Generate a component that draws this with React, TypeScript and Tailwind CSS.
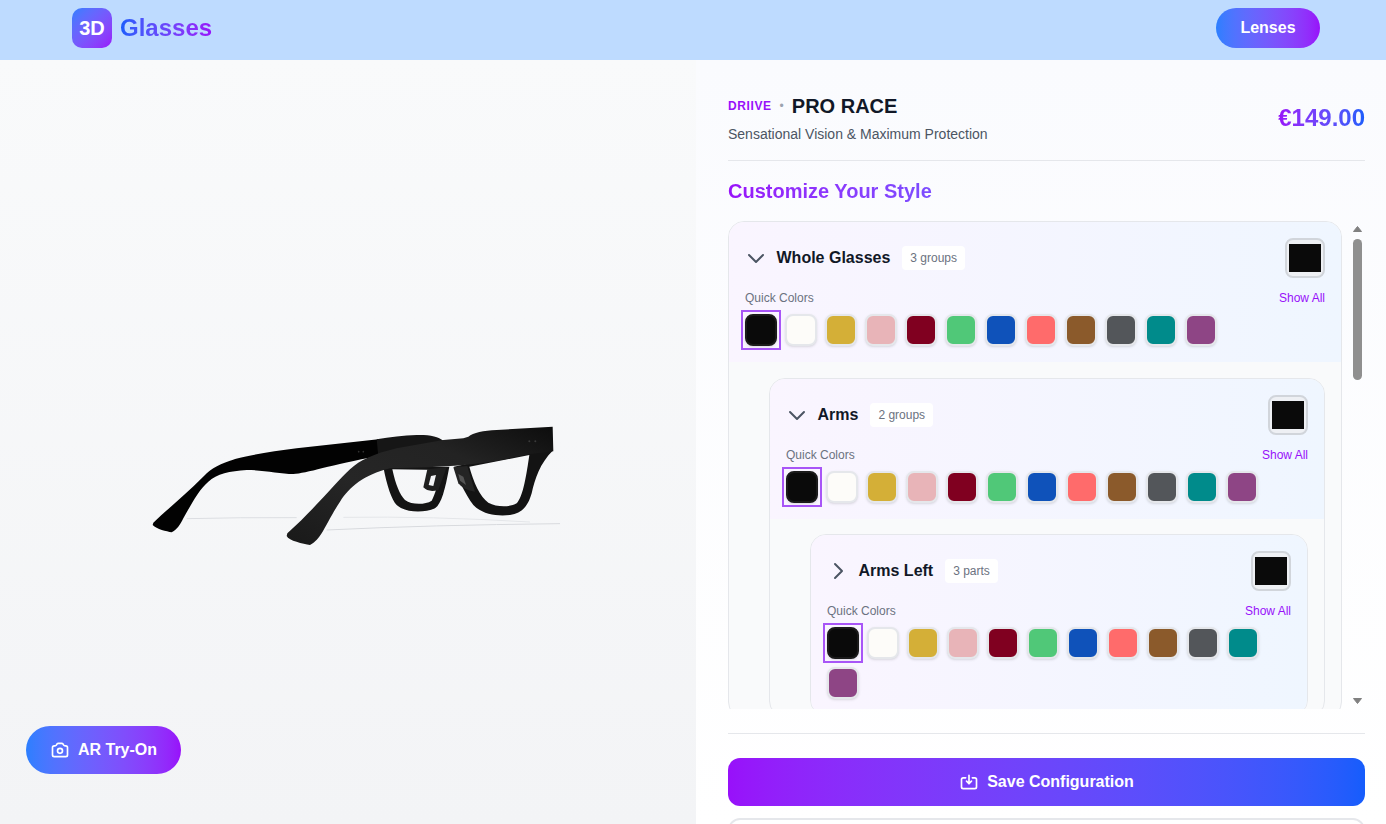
const swatches = [
  '#0a0a0a', '#fdfcf9', '#d4af37', '#e8b4b8', '#800020', '#50c878',
  '#0f52ba', '#ff6b6b', '#8b5a2b', '#53565a', '#008b8b', '#8e4585',
]

function Chevron({ open }: { open: boolean }) {
  return (
    <svg viewBox="0 0 24 24" fill="none" stroke="#4b5563" strokeWidth="2" strokeLinecap="round" strokeLinejoin="round" className="w-6 h-6 -ml-[1.5px] shrink-0">
      <path d={open ? 'M19 9l-7 7-7-7' : 'M9 5l7 7-7 7'} />
    </svg>
  )
}

function SwatchRow() {
  return (
    <div className="flex flex-wrap gap-2 mt-2">
      {swatches.map((color, i) => (
        <div
          key={color}
          className={`relative w-8 h-8 rounded-lg border-2 shadow-sm ${i === 0 ? 'border-[#1a1a1a]' : 'border-[#e5e7eb]'}`}
          style={{ backgroundColor: color }}
        >
          {i === 0 && <span className="absolute -inset-[6px] border-2 border-[#a855f7]" />}
        </div>
      ))}
    </div>
  )
}

function GroupCard({ title, count, open, children }: { title: string; count: string; open: boolean; children?: React.ReactNode }) {
  return (
    <div className="rounded-2xl border border-[#e5e7eb] bg-[#f9fafb] overflow-hidden">
      <div className="p-4 bg-gradient-to-r from-[#faf5ff] to-[#eff6ff]">
        <div className="flex items-center justify-between h-10">
          <div className="flex items-center gap-[9px]">
            <Chevron open={open} />
            <span className="text-base font-bold text-[#111827]">{title}</span>
            <span className="ml-[3px] px-2 py-1 rounded bg-white text-xs text-[#6b7280]">{count}</span>
          </div>
          <div className="w-10 h-10 rounded-lg border-2 border-[#d1d5db] bg-[#eef0f4] px-0.5 py-1">
            <div className="w-full h-full bg-[#0a0a0a]" />
          </div>
        </div>
        <div className="flex items-center justify-between mt-3 text-xs leading-4">
          <span className="text-[#6b7280]">Quick Colors</span>
          <span className="text-[#9810fa]">Show All</span>
        </div>
        <SwatchRow />
      </div>
      {children && <div className="pl-10 pr-4 pt-[15.6px]">{children}</div>}
    </div>
  )
}

function GlassesModel() {
  return (
    <svg viewBox="0 0 1320 450" className="w-[440px] h-[150px]">
      <defs>
        <linearGradient id="nearArm" x1="0" y1="1" x2="1" y2="0">
          <stop offset="0" stopColor="#191919" />
          <stop offset="0.4" stopColor="#262626" />
          <stop offset="0.7" stopColor="#232323" />
          <stop offset="1" stopColor="#0d0d0d" />
        </linearGradient>
        <filter id="soft" filterUnits="userSpaceOnUse" x="0" y="280" width="1320" height="120">
          <feGaussianBlur stdDeviation="1.5" />
        </filter>
      </defs>
      <path d="M170 326 Q330 322 500 323" stroke="#dcdee2" strokeWidth="3" fill="none" filter="url(#soft)" />
      <path d="M590 360 Q900 345 1290 341" stroke="#d8dade" strokeWidth="3" fill="none" filter="url(#soft)" />
      <path d="M640 322 Q900 318 1200 336" stroke="#e4e6e9" strokeWidth="3" fill="none" filter="url(#soft)" />
      {/* far arm */}
      <path d="M68 345 C80 358 110 364 125 367 C140 360 150 345 160 325 C180 290 205 240 235 215 C260 192 300 183 350 180 C400 180 450 192 490 192 C530 190 600 165 745 138 L745 88 L500 115 C420 125 340 138 300 152 C260 165 235 182 215 205 C170 250 110 300 70 338 Z" fill="#020202" />
      <path d="M740 88 C780 82 820 76 860 75 C900 74 925 80 940 92 L945 130 L745 140 Z" fill="#161616" />
      <circle cx="686" cy="125" r="2.5" fill="#333" />
      <circle cx="700" cy="125" r="2.5" fill="#333" />
      {/* rims */}
      <path fillRule="evenodd" d="M760 170 C770 225 785 270 800 285 C825 308 880 310 915 295 C935 280 945 240 958 170 Z M787 178 C797 225 810 255 825 270 C845 285 885 285 905 272 C915 255 925 220 932 180 Z" fill="#141414" />
      <path d="M892 178 L950 172 L925 240 Q895 248 880 232 Z" fill="#1f1f1f" />
      <path d="M903 198 L918 195 L910 228 L896 225 Z" fill="#f4f5f7" />
      <path fillRule="evenodd" d="M972 170 C985 210 1005 250 1030 285 C1055 312 1100 320 1140 315 C1180 308 1195 285 1205 250 C1215 205 1230 160 1268 122 L1190 125 L1018 160 Z M1018 170 C1030 215 1050 260 1075 278 C1100 292 1140 292 1160 280 C1180 260 1190 190 1198 135 Z" fill="#131313" />
      <path d="M970 172 L1012 168 L1035 245 Q1000 240 985 220 Z" fill="#242424" />
      <path d="M985 192 L1000 200 L1008 225 L990 212 Z" fill="#555" />
      {/* near arm and brow */}
      <path d="M470 378 C476 392 520 402 540 405 C558 395 565 385 575 370 C590 345 610 305 630 275 C660 230 700 195 780 175 C860 172 930 172 1000 165 C1100 155 1150 142 1200 132 L1270 124 L1268 50 L1100 60 C1060 62 1030 68 1015 80 L1000 85 L940 90 L800 115 C730 132 690 150 660 178 C620 215 560 290 472 370 Z" fill="url(#nearArm)" />
      <circle cx="1198" cy="94" r="3" fill="#3a3a3a" />
      <circle cx="1216" cy="94" r="3" fill="#3a3a3a" />
    </svg>
  )
}

export default function App() {
  return (
    <div className="h-screen overflow-hidden flex flex-col font-['Liberation_Sans',Arial,sans-serif]">
      <header className="h-[60px] shrink-0 bg-[#bedbff] flex items-start justify-between pt-2 pl-[72px] pr-[66px]">
        <div className="flex items-center gap-2">
          <div className="w-10 h-10 rounded-[10px] bg-gradient-to-br from-[#2b7fff] to-[#9810fa] flex items-center justify-center text-white text-xl font-bold">3D</div>
          <span className="text-2xl font-bold text-transparent bg-clip-text bg-gradient-to-r from-[#155dfc] to-[#9810fa]">Glasses</span>
        </div>
        <button className="w-[104px] h-10 rounded-full bg-gradient-to-r from-[#2b7fff] to-[#9810fa] text-white font-bold">Lenses</button>
      </header>

      <div className="flex-1 flex min-h-0">
        <div className="relative w-[696px] shrink-0 bg-gradient-to-b from-[#f9fafb] to-[#f3f4f6] pl-[130px] pt-[350px]">
          <GlassesModel />
          <button className="absolute left-[26px] bottom-[50px] h-12 w-[155px] rounded-full bg-gradient-to-r from-[#2b7fff] to-[#9810fa] text-white font-bold flex items-center justify-center gap-2">
            <svg viewBox="0 0 24 24" fill="none" stroke="currentColor" strokeWidth="2" strokeLinecap="round" strokeLinejoin="round" className="w-5 h-5">
              <path d="M3 9a2 2 0 012-2h.93a2 2 0 001.664-.89l.812-1.22A2 2 0 0110.07 4h3.86a2 2 0 011.664.89l.812 1.22A2 2 0 0018.07 7H19a2 2 0 012 2v9a2 2 0 01-2 2H5a2 2 0 01-2-2V9z" />
              <path d="M15 13a3 3 0 11-6 0 3 3 0 016 0z" />
            </svg>
            AR Try-On
          </button>
        </div>

        <div className="flex-1 min-w-0 flex flex-col overflow-hidden bg-gradient-to-b from-[#fafbfe] to-white pl-8 pr-[21px] pt-8">
          <div className="flex items-center justify-between pb-4 border-b border-[#e5e7eb]">
            <div>
              <div className="flex items-center gap-2">
                <span className="text-xs font-bold tracking-wider text-[#9810fa]">DRIIVE</span>
                <span className="text-xs text-[#9ca3af]">•</span>
                <span className="text-xl font-bold text-[#111827]">PRO RACE</span>
              </div>
              <p className="mt-1 text-sm text-[#4b5563]">Sensational Vision &amp; Maximum Protection</p>
            </div>
            <span className="text-2xl font-bold text-transparent bg-clip-text bg-gradient-to-r from-[#9810fa] to-[#155dfc]">€149.00</span>
          </div>

          <h2 className="mt-4 mb-4 text-xl font-bold w-fit text-transparent bg-clip-text bg-gradient-to-r from-[#9810fa] to-[#7c4dff]">Customize Your Style</h2>

          <div className="h-[488px] shrink-0 flex overflow-hidden">
            <div className="flex-1 min-w-0 pr-2 overflow-hidden">
              <GroupCard title="Whole Glasses" count="3 groups" open>
                <GroupCard title="Arms" count="2 groups" open>
                  <GroupCard title="Arms Left" count="3 parts" open={false} />
                </GroupCard>
              </GroupCard>
            </div>
            <div className="w-[15px] shrink-0 flex flex-col items-center">
              <svg viewBox="0 0 9 6" className="w-[9px] h-[6px] mt-[5px] fill-[#808080] stroke-[#808080]" strokeLinejoin="round"><path d="M4.5 .5L8.5 5.5H.5z" /></svg>
              <div className="w-[9px] h-[141px] mt-[7px] rounded-full bg-[#8f8f8f]" />
              <svg viewBox="0 0 9 6" className="w-[9px] h-[6px] mt-auto mb-[5px] fill-[#808080] stroke-[#808080]" strokeLinejoin="round"><path d="M.5 .5h8L4.5 5.5z" /></svg>
            </div>
          </div>

          <div className="mt-6 pt-6 border-t border-[#e5e7eb] flex flex-col gap-3">
            <button className="h-12 shrink-0 rounded-xl bg-gradient-to-r from-[#9810fa] to-[#155dfc] text-white font-bold flex items-center justify-center gap-2">
              <svg viewBox="0 0 24 24" fill="none" stroke="currentColor" strokeWidth="2" strokeLinecap="round" strokeLinejoin="round" className="w-5 h-5">
                <path d="M8 7H5a2 2 0 00-2 2v9a2 2 0 002 2h14a2 2 0 002-2V9a2 2 0 00-2-2h-3m-1 4l-3 3m0 0l-3-3m3 3V4" />
              </svg>
              Save Configuration
            </button>
            <div className="h-12 shrink-0 rounded-xl border-2 border-[#e5e7eb] bg-white" />
          </div>
        </div>
      </div>
    </div>
  )
}
